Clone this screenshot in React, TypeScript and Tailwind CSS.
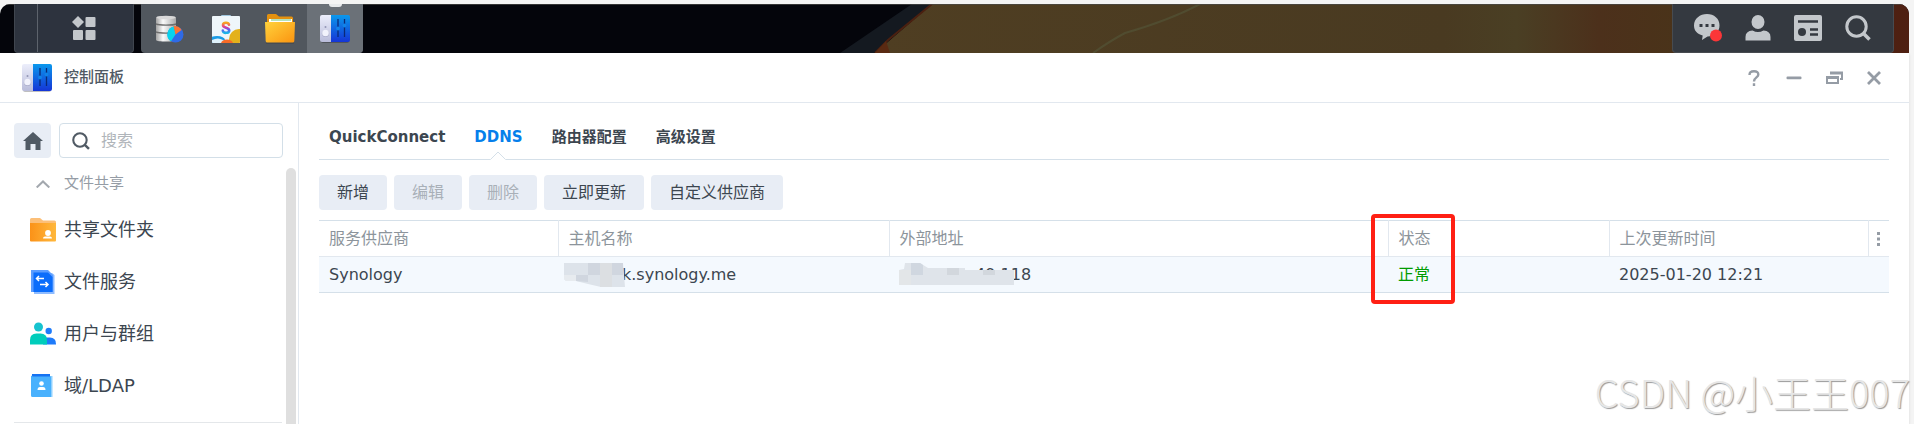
import type { ReactNode } from "react";

const FONT = "font-['DejaVu_Sans','Noto_Sans_CJK_SC',sans-serif]";

const NAV_ITEMS = [
  { label: "共享文件夹", icon: <SharedFolderIcon /> },
  { label: "文件服务", icon: <FileServiceIcon /> },
  { label: "用户与群组", icon: <UsersIcon /> },
  { label: "域/LDAP", icon: <DomainIcon /> },
];

const TABS = ["QuickConnect", "DDNS", "路由器配置", "高级设置"];

const ACTIONS = [
  { label: "新增", disabled: false },
  { label: "编辑", disabled: true },
  { label: "删除", disabled: true },
  { label: "立即更新", disabled: false },
  { label: "自定义供应商", disabled: false },
];

function ControlPanelIcon() {
  return (
    <svg viewBox="0 0 30 28" className="h-7 w-[30px] shrink-0" aria-hidden="true">
      <defs>
        <linearGradient id="cpBlue" x1="0" y1="0" x2="0" y2="1">
          <stop offset="0" stopColor="#0b98ec" />
          <stop offset="1" stopColor="#1535d6" />
        </linearGradient>
        <linearGradient id="cpGray" x1="0" y1="0" x2="0" y2="1">
          <stop offset="0" stopColor="#eceefb" />
          <stop offset="1" stopColor="#b9bcda" />
        </linearGradient>
      </defs>
      <rect x="1" y="2" width="28" height="26" rx="2" fill="#000" opacity=".25" />
      <path d="M2 0h9v27H2a2 2 0 0 1-2-2V2a2 2 0 0 1 2-2z" fill="url(#cpGray)" />
      <path d="M11 0h17a2 2 0 0 1 2 2v23a2 2 0 0 1-2 2H11z" fill="url(#cpBlue)" />
      <circle cx="5.5" cy="12" r="1" fill="#9396b5" />
      <circle cx="5.5" cy="18.5" r="3.6" fill="#a9acc9" />
      <circle cx="5.5" cy="18" r="3.3" fill="#f1f2fc" />
      <path d="M18 4v18M24.500 4v18" stroke="#0a2a78" strokeWidth="1.300" />
      <circle cx="18" cy="13.500" r="1.900" fill="#1283e8" />
      <circle cx="24.500" cy="10.500" r="1.900" fill="#1283e8" />
    </svg>
  );
}

function StorageIcon() {
  return (
    <svg viewBox="0 0 28 28" className="h-7 w-7" aria-hidden="true">
      <defs>
        <linearGradient id="disk" x1="0" y1="0" x2="1" y2="0">
          <stop offset="0" stopColor="#a3a3a3" />
          <stop offset=".35" stopColor="#fafafa" />
          <stop offset="1" stopColor="#a8a8a8" />
        </linearGradient>
      </defs>
      <path d="M0 2.500C0 .5 20 .5 20 2.500V25c0 2-20 2-20 0z" fill="url(#disk)" />
      <ellipse cx="10" cy="2.500" rx="9.500" ry="1.800" fill="#d9d9d9" />
      <path d="M0 9c3 1.500 17 1.500 20 0M0 17c3 1.500 17 1.500 20 0" fill="none" stroke="#6d6d6d" strokeWidth="1.400" />
      <circle cx="19.500" cy="19.500" r="8" fill="#2f6ae6" />
      <path d="M19.500 19.500 15 26.200a8 8 0 0 1 3-14.600z" fill="#08d3ec" />
      <path d="m19.500 19.500-2-8.500a8 8 0 0 1 8 4z" fill="#fb7432" />
    </svg>
  );
}

function AssistantIcon() {
  return (
    <svg viewBox="0 0 28 28" className="h-7 w-7" aria-hidden="true">
      <defs>
        <linearGradient id="sStroke" x1="0" y1="0" x2="0" y2="1">
          <stop offset="0" stopColor="#f7a51c" />
          <stop offset=".4" stopColor="#e93d8c" />
          <stop offset=".65" stopColor="#6e4ff0" />
          <stop offset="1" stopColor="#18b6e8" />
        </linearGradient>
        <clipPath id="assistClip">
          <rect y="1" width="28" height="27" rx="1" />
        </clipPath>
      </defs>
      <rect x="9" width="10" height="3" rx="1" fill="#9fc6de" />
      <g clipPath="url(#assistClip)">
        <rect y="1" width="28" height="27" fill="#eef6fa" />
        <circle cx="27" cy="24" r="10" fill="#e3b11c" />
        <ellipse cx="5" cy="25" rx="8" ry="4" fill="#1a9ce6" />
        <path d="M0 25q6-3 11 0t8 3H0z" fill="#dff1fb" />
        <ellipse cx="15" cy="28.500" rx="6" ry="4" fill="#f76b27" />
      </g>
      <path
        d="M17 9.800C16.500 7 10.800 7 11 10.200c.2 3.200 6.200 1.800 6.200 5.200 0 3.200-6 3.200-6.400.2"
        fill="none" stroke="url(#sStroke)" strokeWidth="2.600" strokeLinecap="round"
      />
    </svg>
  );
}

function FileStationIcon() {
  return (
    <svg viewBox="0 0 30 30" className="h-[30px] w-[30px]" aria-hidden="true">
      <defs>
        <linearGradient id="folder" x1="0" y1="0" x2="1" y2="1">
          <stop offset="0" stopColor="#ffd23c" />
          <stop offset="1" stopColor="#fb9410" />
        </linearGradient>
      </defs>
      <path d="M2 1.500Q2 0 3.500 0H11l3 2.500h12.500Q28 2.500 28 4v6H2z" fill="#e3910f" />
      <path d="M4 5h23v6H4z" fill="#fff" />
      <path d="M6 6h20" stroke="#9bd7a5" strokeWidth="1.500" />
      <path d="M1 28.500h28v1H1z" fill="#33373b" opacity=".6" />
      <path d="M0 8h30l-.7 19q-.1 1.500-1.600 1.500H2.300Q.8 28.500.7 27z" fill="url(#folder)" />
    </svg>
  );
}

function SharedFolderIcon() {
  return (
    <svg viewBox="0 0 26 24" className="h-6 w-[26px]" aria-hidden="true">
      <defs>
        <linearGradient id="shared" x1="0" y1="0" x2="1" y2="0">
          <stop offset="0" stopColor="#fb9218" />
          <stop offset="1" stopColor="#ffb83c" />
        </linearGradient>
      </defs>
      <path d="M0 1.500Q0 0 1.500 0H10l3 2.500h11.500Q26 2.500 26 4v6H0z" fill="#fcbf78" />
      <path d="M0 5h26v17.500q0 1-1 1H1q-1 0-1-1z" fill="url(#shared)" />
      <circle cx="18" cy="15" r="2.900" fill="#fff" />
      <path d="M13 20.500q0-2 2-2h5q2 0 2 2z" fill="#fff" />
    </svg>
  );
}

function FileServiceIcon() {
  return (
    <svg viewBox="0 0 26 26" className="h-[26px] w-[26px]" aria-hidden="true">
      <path d="M4 4h18l2.500 2v19H4z" fill="#8fbcff" />
      <path d="M1 1h17l5 5v17H1z" fill="#5b9dff" />
      <path d="M3.500 3.500H18l4.500 4.500v15h-19z" fill="#0b6dfb" />
      <path d="M14 9.500H6.500M9 7l-2.500 2.500L9 12M10 15.500h8M15.500 13l2.500 2.500-2.500 2.500" fill="none" stroke="#fff" strokeWidth="1.500" />
    </svg>
  );
}

function UsersIcon() {
  return (
    <svg viewBox="0 0 26 24" className="h-6 w-[26px]" aria-hidden="true">
      <circle cx="8.500" cy="5" r="4.500" fill="#16c3cf" />
      <circle cx="18.700" cy="9" r="3.200" fill="#1e7bfa" />
      <path d="M13 15.500h7q6 0 6 6.500v.5H13z" fill="#1e7bfa" />
      <path d="M0 22.500V18q0-6.500 6.500-6.500h4q6.500 0 6.500 6.500v4.500z" fill="#00cdbb" />
    </svg>
  );
}

function DomainIcon() {
  return (
    <svg viewBox="0 0 26 26" className="h-[26px] w-[26px]" aria-hidden="true">
      <path d="M2 1h18v4H2z" fill="#1673f2" />
      <path d="M20 3h2.500v21H20z" fill="#8fd0ff" />
      <path d="M1 2.500q1 1 2.500 1H21V24H2.500Q1 24 1 22.500z" fill="#49b1fd" />
      <circle cx="11.500" cy="10.500" r="2.300" fill="#fff" />
      <path d="M7.500 17q0-3 2.500-3h3q2.500 0 2.500 3z" fill="#fff" />
    </svg>
  );
}

function SearchIcon({ className }: { className: string }) {
  return (
    <svg viewBox="0 0 26 26" className={className} fill="none" stroke="currentColor" aria-hidden="true">
      <circle cx="11.500" cy="11.500" r="9.700" strokeWidth="3" />
      <path d="m18.500 18.500 6 6" strokeWidth="3.500" />
    </svg>
  );
}

function Wallpaper() {
  return (
    <svg viewBox="0 0 1909 49" preserveAspectRatio="none" className="absolute inset-0 h-full w-full" aria-hidden="true">
      <defs>
        <linearGradient id="skin" x1="0" x2="1" y1="0" y2="0">
          <stop offset="0" stopColor="#4f3e22" />
          <stop offset=".55" stopColor="#493a21" />
          <stop offset=".62" stopColor="#4a3f24" />
          <stop offset=".7" stopColor="#4c301b" />
          <stop offset=".8" stopColor="#493419" />
          <stop offset=".95" stopColor="#4a2010" />
          <stop offset="1" stopColor="#4f2012" />
        </linearGradient>
      </defs>
      <path d="M0 0h1909v49H0z" fill="#04050b" />
      <path d="M912 0h20l-58 49h-34z" fill="#141920" />
      <path d="M932 0H1909v49H875z" fill="url(#skin)" />
      <path d="m932 0-44 36-13 13" fill="none" stroke="#4b2010" strokeWidth="2" />
      <path d="M886 37 875 49h15z" fill="#5a2a12" />
      <path d="M1200 0q-30 16-75 29-15 8-32 20" fill="none" stroke="#525236" strokeWidth="2" opacity=".7" />
      <path d="M0 .5h1909" stroke="#4a4a48" opacity=".7" />
    </svg>
  );
}

function TaskButton({ label, children, className }: { label: string; children: ReactNode; className: string }) {
  return (
    <button type="button" aria-label={label} className={`flex items-center justify-center ${className}`}>
      {children}
    </button>
  );
}

function Taskbar() {
  return (
    <header className="relative flex h-[49px] justify-between overflow-hidden rounded-t-[10px]">
      <Wallpaper />
      <div className="relative flex pl-[14px]">
        <div className="flex w-[120px] rounded-b border border-t-0 border-[#40464f] bg-[#2d333e]">
          <div className="w-[23px] border-r border-[#5d636c]" />
          <TaskButton label="主菜单" className="flex-1 pr-1">
            <svg viewBox="0 0 24 24" className="h-6 w-6" fill="#c3c7cb" aria-hidden="true">
              <path d="m6 0 6 6-6 6-6-6z" />
              <rect x="13.500" y="1" width="10" height="10" rx="1" />
              <rect x="1" y="14" width="10" height="10" rx="1" />
              <rect x="13.500" y="14" width="10" height="10" rx="1" />
            </svg>
          </TaskButton>
        </div>
        <div className="ml-[7px] flex w-[222px] overflow-hidden rounded-b bg-[#51575e]">
          <TaskButton label="存储管理器" className="w-[58px]"><StorageIcon /></TaskButton>
          <TaskButton label="套件中心" className="w-[53px]"><AssistantIcon /></TaskButton>
          <TaskButton label="File Station" className="w-[55px]"><FileStationIcon /></TaskButton>
          <TaskButton label="控制面板" className="relative flex-1 bg-[#6b7178]">
            <span className="absolute top-0 h-[3px] w-[13px] rounded-b-sm bg-[#e8eaec]" />
            <ControlPanelIcon />
          </TaskButton>
        </div>
      </div>
      <div className="relative mr-[15px] flex w-[222px] items-center rounded-b border border-t-0 border-[#474b50] bg-[#343940] pl-[10px] text-[#c3c7cb]">
        <TaskButton label="通知" className="h-full w-[50px]">
          <svg viewBox="0 0 28 28" className="h-7 w-7" aria-hidden="true">
            <path d="M13 0c7 0 12.500 4.500 12.500 11.500S20 22 13.500 22.500L8 26l.7-4.500C3 20 0 16.500 0 11.500 0 4.500 6 0 13 0z" fill="currentColor" />
            <path d="M5.500 10h3v3h-3zM11.500 10h3v3h-3zM17.500 10h3v3h-3z" fill="#343940" />
            <circle cx="22" cy="21.500" r="6" fill="#fb3638" />
          </svg>
        </TaskButton>
        <TaskButton label="选项" className="h-full w-[50px]">
          <svg viewBox="0 0 26 26" className="h-[26px] w-[26px]" fill="currentColor" aria-hidden="true">
            <ellipse cx="13" cy="7" rx="6.500" ry="7" />
            <path d="M.5 25.500V22q0-6 7-6.500 5.500 3 11 0 7 .5 7 6.500v3.500z" />
          </svg>
        </TaskButton>
        <TaskButton label="小组件" className="h-full w-[50px]">
          <svg viewBox="0 0 28 26" className="h-[26px] w-7" aria-hidden="true">
            <rect width="28" height="26" rx="2" fill="currentColor" />
            <path d="M4 6.500h20M16 14.500h8M16 19.500h8" stroke="#343940" strokeWidth="2.500" />
            <circle cx="8" cy="17" r="4" fill="#343940" />
          </svg>
        </TaskButton>
        <TaskButton label="搜索" className="h-full w-[50px]"><SearchIcon className="h-[26px] w-[26px]" /></TaskButton>
      </div>
    </header>
  );
}

function TitleBar() {
  return (
    <div className="flex h-[50px] items-center border-b border-[#e2e8ef] pr-[15px] pl-[22px]">
      <ControlPanelIcon />
      <h1 className="ml-3 flex-1 text-[15px] font-medium text-[#505a64]">控制面板</h1>
      <div className="flex text-[#959ca5]">
        <button type="button" aria-label="帮助" className="flex h-8 w-10 items-center justify-center">
          <svg viewBox="0 0 12 16" className="h-4 w-3" fill="none" stroke="currentColor" strokeWidth="2.400" aria-hidden="true">
            <path d="M1.500 5Q1.500 1.200 6 1.200t4.300 3.500C10.300 7.500 6 7.500 6 11.500M6 13.300V16" />
          </svg>
        </button>
        <button type="button" aria-label="最小化" className="flex h-8 w-10 items-center justify-center">
          <svg viewBox="0 0 16 16" className="h-4 w-4" aria-hidden="true">
            <rect x=".5" y="6.500" width="15" height="2.800" rx="1" fill="currentColor" />
          </svg>
        </button>
        <button type="button" aria-label="还原" className="flex h-8 w-10 items-center justify-center">
          <svg viewBox="0 0 17 14" className="h-[14px] w-[17px]" fill="none" stroke="currentColor" strokeWidth="2" aria-hidden="true">
            <path d="M5 2h11v6h-2M1 6.500h11V12H1z" />
            <path d="M0 6.500h13M4 2h13" strokeWidth="3" />
          </svg>
        </button>
        <button type="button" aria-label="关闭" className="flex h-8 w-10 items-center justify-center">
          <svg viewBox="0 0 14 14" className="h-[14px] w-[14px]" stroke="currentColor" strokeWidth="2.800" aria-hidden="true">
            <path d="m1 1 12 12M13 1 1 13" />
          </svg>
        </button>
      </div>
    </div>
  );
}

function Sidebar() {
  return (
    <aside className="flex w-[299px] shrink-0 flex-col border-r border-[#e2e8ef]">
      <div className="flex gap-2 pt-5 pr-[15px] pl-[14px]">
        <button type="button" aria-label="主页" className="flex h-[35px] w-[37px] items-center justify-center rounded bg-[#e8edf5]">
          <svg viewBox="0 0 20 18" className="h-[18px] w-5" fill="#505a64" aria-hidden="true">
            <path d="M10 0 20 9h-2.500v9h-5v-6h-5v6h-5V9H0z" />
          </svg>
        </button>
        <label className="flex h-[35px] min-w-0 flex-1 items-center gap-[11px] rounded border border-[#d3dfe8] px-3 text-[#505a64]">
          <SearchIcon className="h-[18px] w-[18px] shrink-0" />
          <input aria-label="搜索" placeholder="搜索" className="w-full min-w-0 text-base outline-none placeholder:text-[#b0b5ba]" />
        </label>
      </div>
      <div className="flex min-h-0 flex-1">
        <nav className="flex-1 pl-[14px]">
          <button type="button" className="flex h-[46px] w-full items-center gap-[14px] pt-[5px] pl-[22px] text-[15px] text-[#959ca5]">
            <svg viewBox="0 0 14 8" className="h-2 w-[14px]" fill="none" stroke="#a3a8ae" strokeWidth="2" aria-hidden="true">
              <path d="m.7 7.500 6.300-6 6.300 6" />
            </svg>
            文件共享
          </button>
          <ul>
            {NAV_ITEMS.map((item) => (
              <li key={item.label}>
                <a href="#" className="flex h-[52px] items-center gap-2 pl-4 text-lg text-[#3c4650]">
                  {item.icon}
                  {item.label}
                </a>
              </li>
            ))}
          </ul>
          <hr className="mt-[10px] mr-1 border-[#e4e7ea]" />
        </nav>
        <div className="mt-[10px] mr-[2px] w-[10px] rounded-t-full bg-[#dfdfdf]" />
      </div>
    </aside>
  );
}

function Mosaic({ className, children }: { className: string; children: ReactNode }) {
  return (
    <svg className={className} aria-hidden="true">
      {children}
    </svg>
  );
}

function DdnsTable() {
  const head = "relative h-9 border-l border-[#e2e8ef] px-[10px] text-left font-normal";
  return (
    <table className="mt-[10px] w-full table-fixed border-collapse border-y border-[#d5e0e9] text-base">
      <colgroup>
        <col className="w-[239px]" />
        <col className="w-[331px]" />
        <col className="w-[499px]" />
        <col className="w-[221px]" />
        <col />
        <col className="w-[21px]" />
      </colgroup>
      <thead>
        <tr className="border-b border-[#e2e8ef] text-[#8c949b]">
          <th className="h-9 px-[10px] text-left font-normal">服务供应商</th>
          <th className={head}>主机名称</th>
          <th className={head}>外部地址</th>
          <th className={head}>
            状态
            <span className="pointer-events-none absolute -top-[7px] -left-[18px] h-[90px] w-[84px] rounded border-4 border-[#ff2014]" />
          </th>
          <th className={head}>上次更新时间</th>
          <th className="border-l border-[#e2e8ef]">
            <button type="button" aria-label="列设置" className="flex w-full justify-center">
              <svg viewBox="0 0 3 14" className="h-[14px] w-[3px]" fill="#959ca5" aria-hidden="true">
                <path d="M0 0h3v3H0zM0 5.500h3v3H0zM0 11h3v3H0z" />
              </svg>
            </button>
          </th>
        </tr>
      </thead>
      <tbody>
        <tr className="bg-[#f4f9fe] text-[#3c4650]">
          <td className="h-9 px-[10px]">Synology</td>
          <td className="px-[10px]">
            <span className="relative inline-block pl-[54px]">
              k.synology.me
              <Mosaic className="absolute top-0 -left-1 h-6 w-[61px]">
                <path d="M0 0h59l2 24H37l-13-3-12-3H2l-2-2z" fill="#dde3ea" />
                <path d="M24 0h12v12H24zM48 0h11v12H48zM12 12h12v7l-12-1z" fill="#d0d6df" />
                <path d="M36 0h12v24H36z" fill="#dcdfe2" />
                <path d="M0 12h12v6H2l-2-2z" fill="#e7ebef" />
              </Mosaic>
            </span>
          </td>
          <td className="px-[10px]">
            <span className="relative inline-block pl-[71px]">
              .49.118
              <Mosaic className="absolute top-0 left-0 h-[22px] w-[115px]">
                <path d="M6 0h15l8 5h37v2h49v15H0V7l5-1z" fill="#dfe4ea" />
                <path d="M12 0h9l3 2v10H12z" fill="#d0d7e0" />
                <path d="M48 5h12v7H48zM84 7h12v5H84z" fill="#d2d7dd" />
                <path d="M0 7h12v15H0z" fill="#e3e6e8" />
              </Mosaic>
            </span>
          </td>
          <td className="px-[10px] text-[#009c00]">正常</td>
          <td className="px-[10px]">2025-01-20 12:21</td>
          <td />
        </tr>
      </tbody>
    </table>
  );
}

export default function App() {
  return (
    <div className={`relative min-h-screen overflow-hidden bg-[#f4f4f4] pt-1 pr-[5px] ${FONT}`}>
      <Taskbar />
      <div className="flex min-h-[calc(100vh-53px)] flex-col bg-white shadow">
        <TitleBar />
        <div className="flex flex-1">
          <Sidebar />
          <main className="min-w-0 flex-1 pr-5 pl-5">
            <div role="tablist" className="flex h-[57px] gap-[29px] border-b border-[#d5e0e9] px-[10px] pt-[13px] text-[15px] font-bold text-[#3c4650]">
              {TABS.map((tab) => (
                <button
                  key={tab}
                  type="button"
                  role="tab"
                  aria-selected={tab === "DDNS"}
                  className={tab === "DDNS" ? "relative text-[#057feb]" : ""}
                >
                  {tab}
                  {tab === "DDNS" && (
                    <svg viewBox="0 0 16 9" className="absolute -bottom-px left-1/2 h-[9px] w-4 -translate-x-1/2" aria-hidden="true">
                      <path d="M0 9 8 1l8 8z" fill="#fff" />
                      <path d="m.5 8.500 7.500-7.500 7.500 7.500" fill="none" stroke="#d5e0e9" />
                    </svg>
                  )}
                </button>
              ))}
            </div>
            <div className="mt-[15px] flex gap-[7px]">
              {ACTIONS.map((action) => (
                <button
                  key={action.label}
                  type="button"
                  disabled={action.disabled}
                  className="h-[35px] rounded bg-[#e8edf5] px-[18px] text-base text-[#3c4650] disabled:text-[#a9b0b8]"
                >
                  {action.label}
                </button>
              ))}
            </div>
            <DdnsTable />
          </main>
        </div>
      </div>
      <div className="pointer-events-none absolute right-1 bottom-3 font-['Noto_Sans_CJK_SC',sans-serif] text-[38px] leading-10 font-light text-[#e6e6e6] [text-shadow:1px_1px_1px_#999]">
        CSDN @小王王007
      </div>
    </div>
  );
}
